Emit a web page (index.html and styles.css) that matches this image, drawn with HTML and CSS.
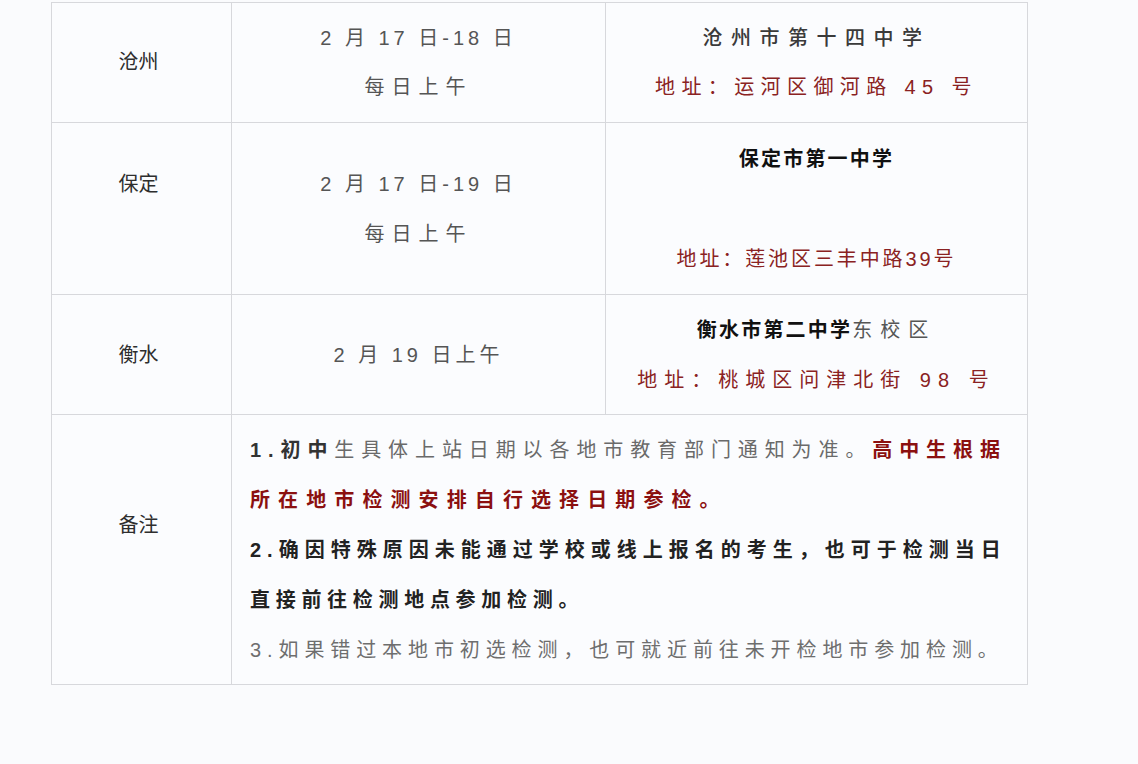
FILE: index.html
```html
<!DOCTYPE html>
<html lang="zh-CN">
<head>
<meta charset="utf-8">
<title>初选检测安排</title>
<link rel="stylesheet" href="styles.css">
</head>
<body>
<table class="sched">
  <colgroup><col class="c1"><col class="c2"><col class="c3"></colgroup>
  <tr class="r1">
    <td class="city"><div class="ln">沧州</div></td>
    <td class="when">
      <div class="ln date">2 月 17 日-18 日</div>
      <div class="ln daily">每日上午</div>
    </td>
    <td class="site">
      <div class="ln title-a">沧州市第十四中学</div>
      <div class="ln addr addr-a">地址：运河区御河路 45 号</div>
    </td>
  </tr>
  <tr class="r2">
    <td class="city"><div class="ln">保定</div><div class="ln">&nbsp;</div></td>
    <td class="when">
      <div class="ln date">2 月 17 日-19 日</div>
      <div class="ln daily">每日上午</div>
    </td>
    <td class="site">
      <div class="ln title-b">保定市第一中学</div>
      <div class="ln">&nbsp;</div>
      <div class="ln addr addr-b">地址：莲池区三丰中路39号</div>
    </td>
  </tr>
  <tr class="r3">
    <td class="city"><div class="ln">衡水</div></td>
    <td class="when">
      <div class="ln date">2 月 19 日上午</div>
    </td>
    <td class="site">
      <div class="ln"><span class="title-b">衡水市第二中学</span><span class="campus">东校区</span></div>
      <div class="ln addr addr-c">地址：桃城区问津北街 98 号</div>
    </td>
  </tr>
  <tr class="r4">
    <td class="city"><div class="ln">备注</div><div class="ln">&nbsp;</div></td>
    <td class="notes" colspan="2">
      <div class="ln l1"><span class="n-dark">1.初中</span><span class="n-light">生具体上站日期以各地市教育部门通知为准。</span><span class="n-red">高中生根据</span></div>
      <div class="ln l2 n-red">所在地市检测安排自行选择日期参检。</div>
      <div class="ln l3 n-bold">2.确因特殊原因未能通过学校或线上报名的考生，也可于检测当日</div>
      <div class="ln l4 n-bold">直接前往检测地点参加检测。</div>
      <div class="ln l5 n-grey">3.如果错过本地市初选检测，也可就近前往未开检地市参加检测。</div>
    </td>
  </tr>
</table>
</body>
</html>
```
FILE: styles.css
```css
html, body {
  margin: 0;
  background: #fafbfd;
}
body {
  padding: 2px 0 0 51px;
  height: 762px;
  font-family: "Liberation Sans", "Noto Sans CJK SC", sans-serif;
  font-size: 20px;
  color: #333;
}
.sched {
  border-collapse: collapse;
  table-layout: fixed;
  width: 976px;
  background: #fbfcfe;
}
.c1 { width: 180px; }
.c2 { width: 374px; }
.c3 { width: 422px; }
.sched td {
  border: 1px solid #d7d8dc;
  padding: 0;
  vertical-align: middle;
  text-align: center;
}
.r1 { height: 120px; }
.r2 { height: 172px; }
.r3 { height: 120px; }
.r4 { height: 270px; }

.ln {
  line-height: 50px;
  white-space: nowrap;
}
.r1 .ln { line-height: 49px; }

.city { color: #2e2e2e; padding-right: 6px !important; }
.when { color: #555; }
.date { letter-spacing: 4px; }
.daily { letter-spacing: 7px; }

.title-a {
  color: #3a3a3a;
  letter-spacing: 8.5px;
  font-weight: 500;
}
.title-b {
  color: #111;
  font-weight: 700;
  letter-spacing: 2.2px;
}
.campus {
  color: #555;
  letter-spacing: 8px;
}
.addr { color: #8a2222; }
.addr-a { letter-spacing: 6.4px; }
.addr-b { letter-spacing: 2.9px; }
.addr-c { letter-spacing: 7px; }

.notes {
  text-align: left !important;
  padding: 0 0 0 18px !important;
}
.l1 { letter-spacing: 6.9px; }
.l2 { letter-spacing: 8.1px; }
.l3 { letter-spacing: 6px; }
.l4 { letter-spacing: 5.7px; }
.l5 { letter-spacing: 5.9px; }
.n-dark { color: #333; font-weight: 700; }
.n-light { color: #6a6a6a; }
.n-red { color: #8b1010; font-weight: 700; }
.n-bold { color: #222; font-weight: 700; }
.n-grey { color: #6e6e6e; }
```
